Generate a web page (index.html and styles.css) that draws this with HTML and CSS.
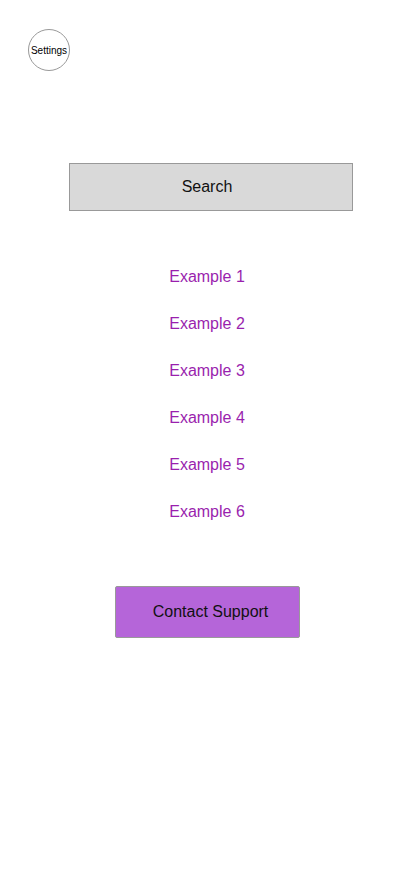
FILE: index.html
```html
<!DOCTYPE html>
<html>
<head>
<meta charset="utf-8">
<link rel="stylesheet" href="styles.css">
</head>
<body>
<div class="page">
  <div class="header">
    <div class="settings">Settings</div>
  </div>
  <div class="search">Search</div>
  <ul class="examples">
    <li>Example 1</li>
    <li>Example 2</li>
    <li>Example 3</li>
    <li>Example 4</li>
    <li>Example 5</li>
    <li>Example 6</li>
  </ul>
  <div class="contact-wrap">
    <div class="contact">Contact Support</div>
  </div>
</div>
</body>
</html>
```
FILE: styles.css
```css
html, body {
  margin: 0;
  padding: 0;
  background: #ffffff;
}
body {
  font-family: "Liberation Sans", Arial, sans-serif;
  color: #000;
}
.page {
  display: flex;
  flex-direction: column;
  width: 414px;
}
.header {
  padding: 29px 0 0 28px;
  height: 42px;
}
.settings {
  width: 40px;
  height: 40px;
  border: 1px solid #999;
  border-radius: 50%;
  display: flex;
  align-items: center;
  justify-content: center;
  font-size: 10px;
  color: #000;
}
.search {
  margin: 92px 0 0 69px;
  width: 274px;
  height: 46px;
  padding-right: 8px;
  border: 1px solid #999;
  background: #d9d9d9;
  display: flex;
  align-items: center;
  justify-content: center;
  font-size: 16px;
  color: #111;
}
.examples {
  list-style: none;
  margin: 42px 0 0 0;
  padding: 0;
  display: flex;
  flex-direction: column;
}
.examples li {
  height: 47px;
  display: flex;
  align-items: center;
  justify-content: center;
  font-size: 16px;
  color: #9a1fae;
}
.contact-wrap {
  margin-top: 51px;
  padding-left: 115px;
}
.contact {
  width: 177px;
  height: 50px;
  padding-left: 6px;
  border: 1px solid #999;
  border-radius: 2px;
  background: #b565d9;
  display: flex;
  align-items: center;
  justify-content: center;
  font-size: 16px;
  color: #111;
}
```
